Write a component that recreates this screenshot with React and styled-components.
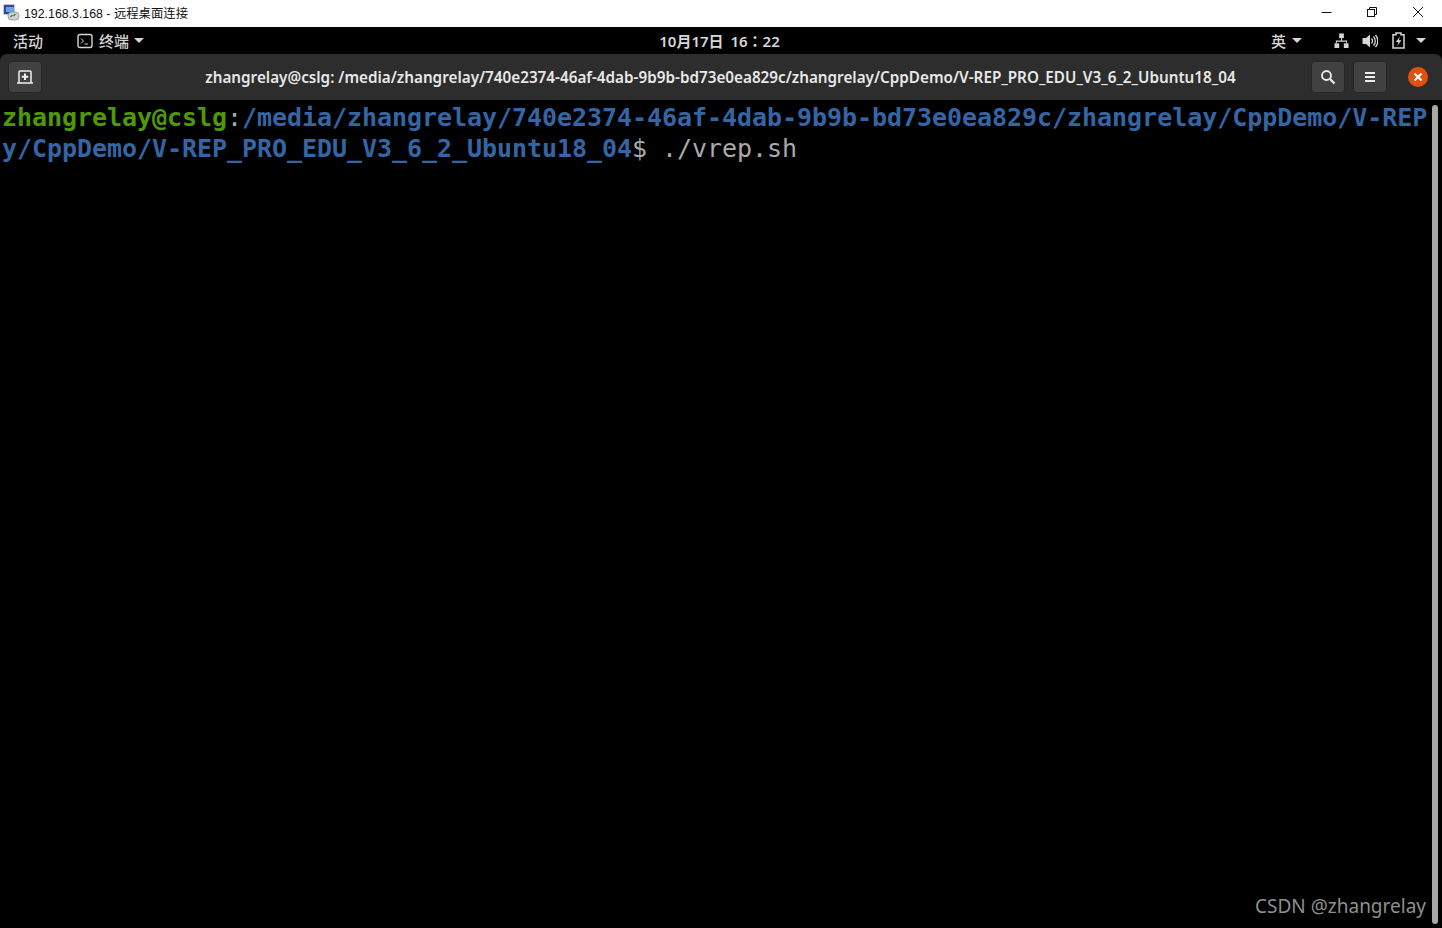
import React from 'react'
import styled, { createGlobalStyle } from 'styled-components'

const GlobalStyle = createGlobalStyle`
  html, body {
    margin: 0;
    padding: 0;
    background: #000;
    overflow: hidden;
  }
`

const Page = styled.div`
  width: 1442px;
  height: 928px;
  display: flex;
  flex-direction: column;
  background: #000;
  overflow: hidden;
`

const RdpBar = styled.div`
  height: 27px;
  flex: none;
  box-sizing: border-box;
  background: #fff;
  display: flex;
  align-items: center;
  padding: 0 1px 3px 3px;
  font-family: 'Liberation Sans', 'Noto Sans CJK SC', sans-serif;
  font-size: 12.35px;
  color: #111;
`

const RdpTitle = styled.span`
  margin: 2px 0 0 4px;
  flex: 1;
`

const RdpButton = styled.div`
  width: 46px;
  height: 24px;
  display: flex;
  align-items: center;
  justify-content: center;
`

const TopBar = styled.div`
  height: 27px;
  flex: none;
  background: #000;
  display: grid;
  grid-template-columns: 1fr auto 1fr;
  align-items: center;
  padding: 0 16px 0 13px;
  font-family: 'Noto Sans CJK SC', 'Noto Sans', sans-serif;
  font-size: 15px;
  font-weight: 500;
  color: #d6d6d6;
`

const BarGroup = styled.div`
  display: flex;
  align-items: center;
  justify-content: ${(props) => (props.end ? 'flex-end' : 'flex-start')};
`

const Clock = styled.div`
  font-family: 'Noto Sans', 'Noto Sans CJK TC', sans-serif;
  font-weight: 600;
  font-size: 15px;
  word-spacing: 3px;
`

const Caret = styled.span`
  width: 0;
  height: 0;
  margin-left: ${(props) => props.gap || 5}px;
  border-left: 5px solid transparent;
  border-right: 5px solid transparent;
  border-top: 5px solid #d6d6d6;
`

const AppMenu = styled.div`
  display: flex;
  align-items: center;
  margin-left: 34px;
`

const AppLabel = styled.span`
  margin-left: 6px;
`

const TrayIcon = styled.svg`
  display: block;
  margin-left: ${(props) => props.gap}px;
`

const HeaderBar = styled.div`
  height: 46px;
  flex: none;
  box-sizing: border-box;
  background: #2d2d2d;
  border-radius: 7px 7px 0 0;
  display: flex;
  align-items: center;
  padding: 0 14px 0 8px;
`

const HeaderButton = styled.div`
  width: 34px;
  height: 32px;
  box-sizing: border-box;
  background: #414141;
  border: 1px solid #262626;
  border-radius: 4px;
  display: flex;
  align-items: center;
  justify-content: center;
  margin-left: ${(props) => props.gap || 0}px;
`

const WindowTitle = styled.div`
  flex: 1;
  text-align: center;
  font-family: 'Noto Sans', sans-serif;
  font-weight: 600;
  font-size: 15.25px;
  color: #e8e8e8;
  white-space: nowrap;
  padding-left: 88px;
`

const CloseButton = styled.div`
  width: 20px;
  height: 20px;
  border-radius: 50%;
  background: #e2500f;
  margin-left: 21px;
  display: flex;
  align-items: center;
  justify-content: center;
`

const Terminal = styled.div`
  flex: 1;
  position: relative;
  display: flex;
  background: #000;
`

const Output = styled.pre`
  margin: 0;
  padding: 2px 0 0 2px;
  flex: 1;
  font-family: 'DejaVu Sans Mono', monospace;
  font-size: 25px;
  line-height: 31px;
  color: #aaa;
  letter-spacing: -0.05px;
`

const User = styled.span`
  color: #4e9a06;
  font-weight: 700;
`

const Path = styled.span`
  color: #3465a4;
  font-weight: 700;
`

const ScrollTrack = styled.div`
  width: 10px;
  flex: none;
  padding-top: 5px;
  box-sizing: border-box;
`

const ScrollThumb = styled.div`
  width: 6px;
  height: 819px;
  border-radius: 3px;
  background: #a8a8a8;
`

const Watermark = styled.div`
  position: absolute;
  right: 16px;
  bottom: 9px;
  font-family: 'Noto Sans', sans-serif;
  font-size: 19px;
  color: #8f8f8f;
`

export default function App() {
  return (
    <Page>
      <GlobalStyle />
      <RdpBar>
        <svg width="17" height="17" viewBox="0 0 17 17">
          <rect x="1" y="1" width="10" height="9" fill="#1f4fb0" stroke="#555" strokeWidth="0.7" />
          <rect x="3" y="3" width="8" height="5" fill="#6fa0e8" />
          <rect x="5" y="8" width="11" height="8" rx="3.5" fill="#cfd3cf" stroke="#777" strokeWidth="0.6" />
          <path d="M7.5 13l2-2M10.5 12l2-2" stroke="#1b9a2c" strokeWidth="1.3" />
        </svg>
        <RdpTitle>192.168.3.168 - 远程桌面连接</RdpTitle>
        <RdpButton>
          <svg width="12" height="12" viewBox="0 0 12 12">
            <path d="M1.500 6.500h10" stroke="#111" />
          </svg>
        </RdpButton>
        <RdpButton>
          <svg width="12" height="12" viewBox="0 0 12 12" fill="none" stroke="#111">
            <rect x="1.500" y="3.500" width="7" height="7" />
            <path d="M3.500 3.500v-2h7v7h-2" />
          </svg>
        </RdpButton>
        <RdpButton>
          <svg width="12" height="12" viewBox="0 0 12 12">
            <path d="M1 1l10 10M11 1L1 11" stroke="#111" />
          </svg>
        </RdpButton>
      </RdpBar>
      <TopBar>
        <BarGroup>
          <span>活动</span>
          <AppMenu>
            <svg width="16" height="16" viewBox="0 0 16 16" fill="none" stroke="#d6d6d6">
              <rect x="1" y="1.500" width="14" height="13" rx="2" strokeWidth="1.400" />
              <path d="M4 5.500l2.500 2.500L4 10.500M7.500 11h3.500" strokeWidth="1" />
            </svg>
            <AppLabel>终端</AppLabel>
            <Caret />
          </AppMenu>
        </BarGroup>
        <Clock>10月17日 16：22</Clock>
        <BarGroup end>
          <span>英</span>
          <Caret gap={6} />
          <TrayIcon gap={32} width="15" height="15" viewBox="0 0 16 16" fill="#d6d6d6">
            <rect x="5.500" y="0.500" width="5" height="5" />
            <rect x="0.500" y="11" width="5" height="5" />
            <rect x="10.500" y="11" width="5" height="5" />
            <path d="M7.500 5h1v3h5.500v3h-1V9.200H3V11H2V8h5.500z" />
          </TrayIcon>
          <TrayIcon gap={13} width="16" height="16" viewBox="0 0 16 16" fill="none" stroke="#d6d6d6">
            <path d="M0.500 5h3.500l4-3.500v13L4 11H0.500z" fill="#d6d6d6" stroke="none" />
            <path d="M9.500 5.500a3.500 3.500 0 0 1 0 5M11.500 3.500a6.500 6.500 0 0 1 0 9M13.500 2a9 9 0 0 1 0 12" strokeWidth="1.300" />
          </TrayIcon>
          <TrayIcon gap={14} width="13" height="17" viewBox="0 0 13 17" fill="none">
            <path d="M4 1h5v1.800h3V16H1V2.800h3z" stroke="#d6d6d6" strokeWidth="1.500" />
            <path d="M8 4.500L3.800 10h2.700L5.200 14 9.500 8.300H6.800z" fill="#d6d6d6" />
          </TrayIcon>
          <Caret gap={11} />
        </BarGroup>
      </TopBar>
      <HeaderBar>
        <HeaderButton>
          <svg width="16" height="14" viewBox="0 0 16 14" fill="none" stroke="#f0f0f0">
            <path d="M0 13h16M2 13V2a1 1 0 0 1 1-1h10a1 1 0 0 1 1 1v11" strokeWidth="1.500" />
            <path d="M8 3.500v6.500M4.800 6.700h6.400" strokeWidth="2" />
          </svg>
        </HeaderButton>
        <WindowTitle>
          zhangrelay@cslg: /media/zhangrelay/740e2374-46af-4dab-9b9b-bd73e0ea829c/zhangrelay/CppDemo/V-REP_PRO_EDU_V3_6_2_Ubuntu18_04
        </WindowTitle>
        <HeaderButton>
          <svg width="16" height="16" viewBox="0 0 16 16" fill="none" stroke="#eee">
            <circle cx="6.500" cy="6.500" r="4.500" strokeWidth="1.800" />
            <path d="M10 10l4.500 4.500" strokeWidth="2.200" />
          </svg>
        </HeaderButton>
        <HeaderButton gap={8}>
          <svg width="12" height="12" viewBox="0 0 12 12" stroke="#eee" strokeWidth="1.800">
            <path d="M1 2h10M1 6h10M1 10h10" />
          </svg>
        </HeaderButton>
        <CloseButton>
          <svg width="10" height="10" viewBox="0 0 10 10" stroke="#fff" strokeWidth="2.200">
            <path d="M1.500 1.500l7 7M8.500 1.500l-7 7" />
          </svg>
        </CloseButton>
      </HeaderBar>
      <Terminal>
        <Output>
          <User>zhangrelay@cslg</User>:<Path>/media/zhangrelay/740e2374-46af-4dab-9b9b-bd73e0ea829c/zhangrelay/CppDemo/V-REP</Path>
          {'\n'}
          <Path>y/CppDemo/V-REP_PRO_EDU_V3_6_2_Ubuntu18_04</Path>$ ./vrep.sh
        </Output>
        <ScrollTrack>
          <ScrollThumb />
        </ScrollTrack>
        <Watermark>CSDN @zhangrelay</Watermark>
      </Terminal>
    </Page>
  )
}
